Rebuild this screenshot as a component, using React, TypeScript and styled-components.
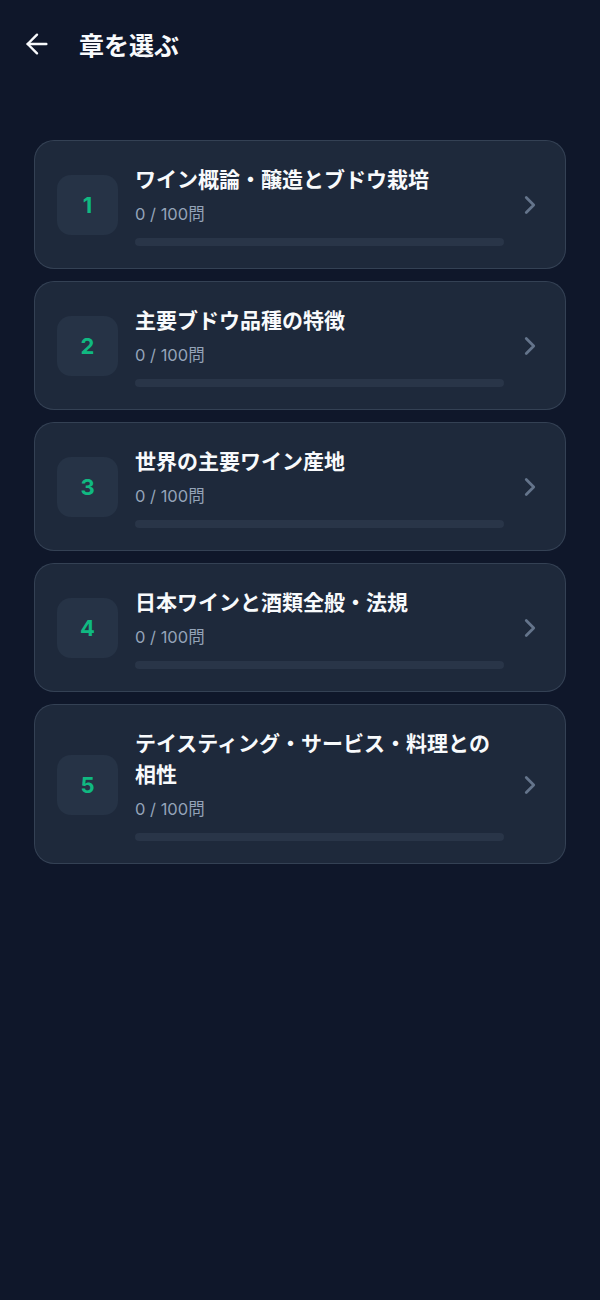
import React from 'react';
import styled, { createGlobalStyle } from 'styled-components';
import { ArrowLeft, ChevronRight } from 'lucide-react';

const GlobalStyle = createGlobalStyle`
  html, body {
    margin: 0;
    padding: 0;
    background: #0f172a;
  }
  body {
    font-family: Inter, "Noto Sans CJK JP", sans-serif;
    color: #f8fafc;
  }
  * { box-sizing: border-box; }
`;

interface Chapter {
  id: number;
  title: string;
  done: number;
  total: number;
}

const chapters: Chapter[] = [
  { id: 1, title: 'ワイン概論・醸造とブドウ栽培', done: 0, total: 100 },
  { id: 2, title: '主要ブドウ品種の特徴', done: 0, total: 100 },
  { id: 3, title: '世界の主要ワイン産地', done: 0, total: 100 },
  { id: 4, title: '日本ワインと酒類全般・法規', done: 0, total: 100 },
  { id: 5, title: 'テイスティング・サービス・料理との相性', done: 0, total: 100 },
];

const Page = styled.div`
  min-height: 1300px;
  background: #0f172a;
`;

const Header = styled.header`
  display: flex;
  align-items: center;
  gap: 26px;
  height: 90px;
  padding: 0 0 2px 21px;
`;

const BackButton = styled.button`
  display: flex;
  align-items: center;
  justify-content: center;
  width: 32px;
  height: 32px;
  padding: 0;
  border: none;
  background: transparent;
  color: #f8fafc;
  cursor: pointer;
`;

const Title = styled.h1`
  margin: 0;
  font-size: 25px;
  font-weight: 700;
  color: #f8fafc;
`;

const List = styled.main`
  display: flex;
  flex-direction: column;
  gap: 12px;
  padding: 50px 34px 0;
`;

const Card = styled.button`
  display: flex;
  align-items: center;
  width: 100%;
  padding: 23px 20px 22px 22px;
  background: #1e293b;
  border: 1px solid rgba(71, 85, 105, 0.55);
  border-radius: 20px;
  text-align: left;
  font-family: inherit;
  cursor: pointer;
`;

const NumberBox = styled.div`
  flex: 0 0 61px;
  height: 60px;
  margin-right: 17px;
  display: flex;
  align-items: center;
  justify-content: center;
  border-radius: 14px;
  background: #263346;
  color: #10b981;
  font-size: 22px;
  font-weight: 700;
`;

const Body = styled.div`
  flex: 1;
  display: flex;
  flex-direction: column;
  min-width: 0;
`;

const CardTitle = styled.div`
  font-size: 21px;
  font-weight: 700;
  line-height: 31px;
  color: #f8fafc;
`;

const Count = styled.div`
  margin-top: 7px;
  font-size: 16.5px;
  line-height: 24px;
  color: #94a3b8;
`;

const Track = styled.div`
  margin-top: 12px;
  height: 8px;
  border-radius: 4px;
  background: #293548;
  overflow: hidden;
`;

const Fill = styled.div`
  height: 100%;
  background: #10b981;
  border-radius: 4px;
`;

const Chevron = styled.div`
  flex: 0 0 30px;
  display: flex;
  align-items: center;
  justify-content: center;
  margin-left: 11px;
  color: #64748b;
`;

export default function App() {
  return (
    <Page>
      <GlobalStyle />
      <Header>
        <BackButton aria-label="戻る">
          <ArrowLeft size={32} strokeWidth={1.8} />
        </BackButton>
        <Title>章を選ぶ</Title>
      </Header>
      <List>
        {chapters.map((c) => (
          <Card key={c.id}>
            <NumberBox>{c.id}</NumberBox>
            <Body>
              <CardTitle>{c.title}</CardTitle>
              <Count>
                {c.done} / {c.total}問
              </Count>
              <Track>
                <Fill style={{ width: `${(c.done / c.total) * 100}%` }} />
              </Track>
            </Body>
            <Chevron>
              <ChevronRight size={30} strokeWidth={2.2} />
            </Chevron>
          </Card>
        ))}
      </List>
    </Page>
  );
}
